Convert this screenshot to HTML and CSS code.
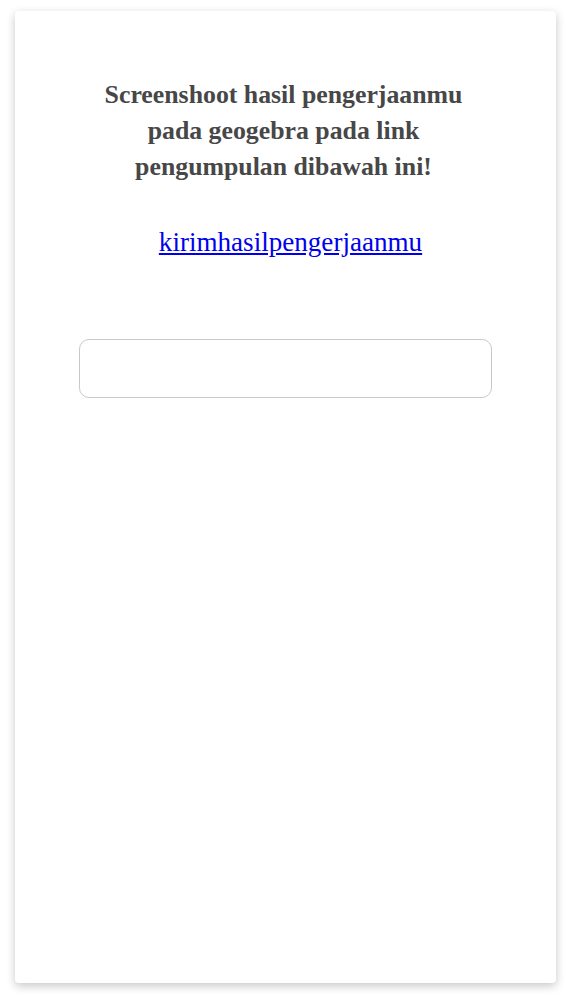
FILE: index.html
```html
<!DOCTYPE html>
<html lang="id">
<head>
<meta charset="utf-8">
<link rel="stylesheet" href="styles.css">
</head>
<body>
<div class="card">
  <div class="content">
    <p class="title">Screenshoot hasil pengerjaanmu pada geogebra pada link pengumpulan dibawah ini!</p>
    <p class="linkline"><a href="#">kirimhasilpengerjaanmu</a></p>
    <div class="field"></div>
  </div>
</div>
</body>
</html>
```
FILE: styles.css
```css
html, body {
  margin: 0;
  padding: 0;
  background: #ffffff;
}
body {
  padding: 11px 16px 22px 15px;
  font-family: "Liberation Serif", "DejaVu Serif", serif;
}
.card {
  height: 972px;
  background: #ffffff;
  border-radius: 4px;
  box-shadow: 0 3px 10px rgba(0, 0, 0, 0.22);
}
.content {
  display: flex;
  flex-direction: column;
  align-items: center;
  padding-top: 66px;
}
.title {
  margin: 0 4px 0 0;
  width: 385px;
  text-align: center;
  font-size: 25.8px;
  line-height: 36px;
  font-weight: bold;
  color: #474747;
}
.linkline {
  margin: 42px 0 0 10px;
  font-size: 27.1px;
  line-height: 30px;
}
.linkline a {
  color: #0000ee;
  text-decoration: underline;
}
.field {
  margin-top: 82px;
  width: 411px;
  height: 57px;
  border: 1px solid #c9c9c9;
  border-radius: 10px;
}
```
